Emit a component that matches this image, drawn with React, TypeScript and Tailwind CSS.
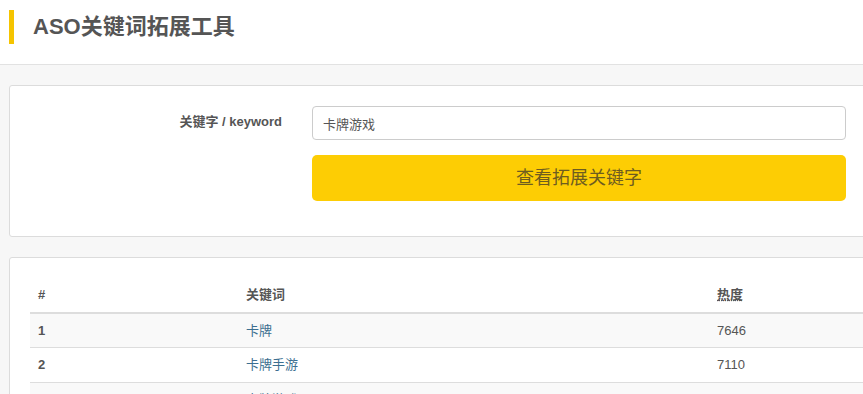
import React from 'react'

const rows = [
    { rank: 1, word: '卡牌', heat: 7646 },
    { rank: 2, word: '卡牌手游', heat: 7110 },
    { rank: 3, word: '卡牌游戏', heat: 6932 },
]

const App = () => {
    return (
        <div className="w-[863px] h-[394px] overflow-hidden bg-[#f7f7f7] font-['Liberation_Sans','Noto_Sans_CJK_SC',sans-serif] text-[13px] text-[#555]">
            {/* Page header */}
            <div className="h-[65px] bg-white border-b border-[#e2e2e2] flex items-start pt-[10px] pl-[9px]">
                <div className="w-[5px] h-[34px] bg-[#f5c400]" />
                <h1 className="ml-[19px] mt-[2px] text-[22px] leading-[30px] font-bold text-[#555]">ASO关键词拓展工具</h1>
            </div>

            <div className="w-[890px] pl-[9px] pt-[20px]">
                {/* Search form */}
                <div className="h-[152px] bg-white border border-[#dcdcdc] rounded-[3px] pt-[20px]">
                    <div className="flex items-start">
                        <label className="w-[272px] text-right font-bold pt-[7px] leading-[18px]">关键字 / keyword</label>
                        <div className="ml-[30px] w-[534px] flex flex-col gap-[15px]">
                            <input
                                className="h-[34px] w-full border border-[#ccc] rounded-[4px] px-[10px] text-[13px] text-[#555] outline-none"
                                defaultValue="卡牌游戏"
                            />
                            <button className="h-[46px] w-full rounded-[5px] bg-[#fdcd04] text-[18px] text-[#6d5c20]">查看拓展关键字</button>
                        </div>
                    </div>
                </div>

                {/* Results */}
                <div className="mt-[20px] bg-white border border-[#dcdcdc] rounded-[3px] px-[20px] pt-[20px]">
                    <table className="w-[838px] border-collapse">
                        <thead>
                            <tr className="text-left font-bold">
                                <th className="w-[208px] px-[8px] pt-[7px] pb-[7px] border-b-2 border-[#ddd] font-bold">#</th>
                                <th className="w-[471px] px-[8px] pt-[7px] pb-[7px] border-b-2 border-[#ddd] font-bold">关键词</th>
                                <th className="px-[8px] pt-[7px] pb-[7px] border-b-2 border-[#ddd] font-bold">
                                    <abbr className="underline decoration-dotted">热度</abbr>
                                </th>
                            </tr>
                        </thead>
                        <tbody>
                            {rows.map((r, i) => (
                                <tr key={r.rank} className={i % 2 === 0 ? 'bg-[#f9f9f9]' : 'bg-white'}>
                                    <td className="px-[8px] h-[35px] border-b border-[#ddd] font-bold">{r.rank}</td>
                                    <td className="px-[8px] h-[35px] border-b border-[#ddd]">
                                        <a className="text-[#3c6f90]">{r.word}</a>
                                    </td>
                                    <td className="px-[8px] h-[35px] border-b border-[#ddd]">{r.heat}</td>
                                </tr>
                            ))}
                        </tbody>
                    </table>
                </div>
            </div>
        </div>
    )
}

export default App
